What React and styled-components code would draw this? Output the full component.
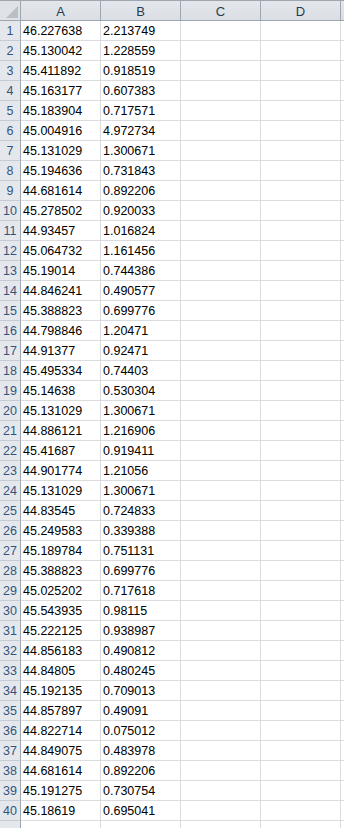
import React from "react";
import styled, { createGlobalStyle } from "styled-components";

const Global = createGlobalStyle`
  html, body { margin: 0; padding: 0; background: #ffffff; overflow: hidden; }
  body { font-family: "Liberation Sans", Arial, sans-serif; }
`;

const data = [
  ["46.227638", "2.213749"],
  ["45.130042", "1.228559"],
  ["45.411892", "0.918519"],
  ["45.163177", "0.607383"],
  ["45.183904", "0.717571"],
  ["45.004916", "4.972734"],
  ["45.131029", "1.300671"],
  ["45.194636", "0.731843"],
  ["44.681614", "0.892206"],
  ["45.278502", "0.920033"],
  ["44.93457", "1.016824"],
  ["45.064732", "1.161456"],
  ["45.19014", "0.744386"],
  ["44.846241", "0.490577"],
  ["45.388823", "0.699776"],
  ["44.798846", "1.20471"],
  ["44.91377", "0.92471"],
  ["45.495334", "0.74403"],
  ["45.14638", "0.530304"],
  ["45.131029", "1.300671"],
  ["44.886121", "1.216906"],
  ["45.41687", "0.919411"],
  ["44.901774", "1.21056"],
  ["45.131029", "1.300671"],
  ["44.83545", "0.724833"],
  ["45.249583", "0.339388"],
  ["45.189784", "0.751131"],
  ["45.388823", "0.699776"],
  ["45.025202", "0.717618"],
  ["45.543935", "0.98115"],
  ["45.222125", "0.938987"],
  ["44.856183", "0.490812"],
  ["44.84805", "0.480245"],
  ["45.192135", "0.709013"],
  ["44.857897", "0.49091"],
  ["44.822714", "0.075012"],
  ["44.849075", "0.483978"],
  ["44.681614", "0.892206"],
  ["45.191275", "0.730754"],
  ["45.18619", "0.695041"],
];

const Sheet = styled.div`
  width: 344px;
  height: 828px;
  overflow: hidden;
  display: grid;
  grid-template-columns: 21px 80px 80px 80px 80px 1fr;
  grid-auto-rows: 20px;
  grid-template-rows: 21px;
  font-family: "Liberation Sans", Arial, sans-serif;
`;

const Corner = styled.div`
  box-sizing: border-box;
  background: #dfe3e8;
  border-top: 1px solid #9ea6b0;
  border-right: 1px solid #9ea6b0;
  border-bottom: 1px solid #9ea6b0;
  display: flex;
  align-items: flex-end;
  justify-content: flex-end;
  padding: 0 2px 2px 0;
`;

const ColHead = styled.div`
  box-sizing: border-box;
  background: linear-gradient(#e3e7ec, #dbdfe5);
  border-top: 1px solid #9ea6b0;
  border-right: ${(p) => (p.$last ? "none" : "1px solid #9ea6b0")};
  border-bottom: 1px solid #9ea6b0;
  display: flex;
  align-items: center;
  justify-content: center;
  font-size: 13px;
  color: #2b3a4c;
  padding-top: 1px;
`;

const RowHead = styled.div`
  box-sizing: border-box;
  background: #e4e8ed;
  border-right: 1px solid #9ea6b0;
  border-bottom: 1px solid #c4cbd4;
  display: flex;
  align-items: flex-end;
  justify-content: center;
  padding-bottom: 2px;
  font-size: 12.5px;
  line-height: 14px;
  color: #34537a;
`;

const Cell = styled.div`
  box-sizing: border-box;
  border-right: ${(p) => (p.$last ? "none" : "1px solid #dadcdd")};
  border-bottom: 1px solid #dadcdd;
  display: flex;
  align-items: flex-end;
  padding: 0 0 2px 2px;
  font-size: 12.5px;
  line-height: 14px;
  color: #000000;
  white-space: nowrap;
  overflow: hidden;
`;

const Triangle = () => (
  <svg width="12" height="12" viewBox="0 0 12 12">
    <polygon points="12,0 12,12 0,12" fill="#b9bfc7" />
  </svg>
);

export default function App() {
  const rows = [...data, ["", ""]];
  return (
    <>
      <Global />
      <Sheet>
        <Corner>
          <Triangle />
        </Corner>
        {["A", "B", "C", "D", ""].map((l, i) => (
          <ColHead key={i} $last={i === 4}>
            {l}
          </ColHead>
        ))}
        {rows.map((r, i) => (
          <React.Fragment key={i}>
            <RowHead>{r[0] ? i + 1 : ""}</RowHead>
            <Cell>{r[0]}</Cell>
            <Cell>{r[1]}</Cell>
            <Cell />
            <Cell />
            <Cell $last />
          </React.Fragment>
        ))}
      </Sheet>
    </>
  );
}
